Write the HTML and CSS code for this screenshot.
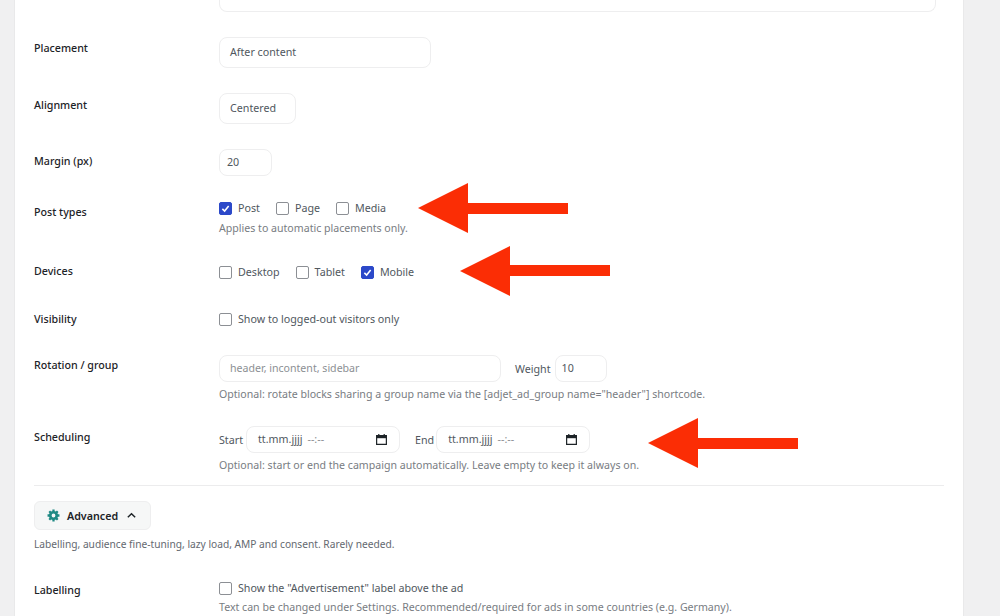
FILE: index.html
```html
<!DOCTYPE html>
<html lang="en">
<head>
<meta charset="utf-8">
<title>Ad settings</title>
<link rel="stylesheet" href="styles.css">
</head>
<body>
<main class="panel">
  <div class="cut-field"></div>

  <div class="row row-placement">
    <div class="label">Placement</div>
    <div class="control"><div class="box box-placement">After content</div></div>
  </div>
  <div class="row row-alignment">
    <div class="label label-five">Alignment</div>
    <div class="control"><div class="box box-alignment">Centered</div></div>
  </div>
  <div class="row row-margin">
    <div class="label label-five">Margin (px)</div>
    <div class="control"><div class="box box-margin">20</div></div>
  </div>

  <div class="row row-types">
    <div class="label label-check">Post types</div>
    <div class="control">
      <div class="checks">
        <label class="check"><span class="cb on"><svg viewBox="0 0 14 14"><path d="M3 7.4 5.9 10.2 11 3.8"/></svg></span>Post</label>
        <label class="check"><span class="cb"></span>Page</label>
        <label class="check"><span class="cb"></span>Media</label>
      </div>
      <p class="help help-tight">Applies to automatic placements only.</p>
    </div>
  </div>

  <div class="row row-devices">
    <div class="label label-devices">Devices</div>
    <div class="control">
      <div class="checks">
        <label class="check"><span class="cb"></span>Desktop</label>
        <label class="check"><span class="cb"></span>Tablet</label>
        <label class="check"><span class="cb on"><svg viewBox="0 0 14 14"><path d="M3 7.4 5.9 10.2 11 3.8"/></svg></span>Mobile</label>
      </div>
    </div>
  </div>

  <div class="row row-visibility">
    <div class="label label-vis">Visibility</div>
    <div class="control">
      <label class="check"><span class="cb"></span>Show to logged-out visitors only</label>
    </div>
  </div>

  <div class="row row-rotation">
    <div class="label label-rot">Rotation / group</div>
    <div class="control">
      <div class="inline">
        <div class="box box-group">header, incontent, sidebar</div>
        <span class="inline-label">Weight</span>
        <div class="box box-weight">10</div>
      </div>
      <p class="help help-tight">Optional: rotate blocks sharing a group name via the [adjet_ad_group name="header"] shortcode.</p>
    </div>
  </div>

  <div class="row row-schedule">
    <div class="label label-sched">Scheduling</div>
    <div class="control">
      <div class="inline">
        <span class="date-label">Start</span>
        <div class="box box-date"><span>tt.mm.jjjj</span><span class="time">--:--</span><svg class="cal" viewBox="0 0 12 12"><path d="M1.5 2.5h9v8h-9z"/><path class="cal-top" d="M1.5 2.2h9v2.6h-9z"/><path class="cal-pin" d="M3.5 1v1.5M8.5 1v1.5"/></svg></div>
        <span class="date-label date-end">End</span>
        <div class="box box-date"><span>tt.mm.jjjj</span><span class="time">--:--</span><svg class="cal" viewBox="0 0 12 12"><path d="M1.5 2.5h9v8h-9z"/><path class="cal-top" d="M1.5 2.2h9v2.6h-9z"/><path class="cal-pin" d="M3.5 1v1.5M8.5 1v1.5"/></svg></div>
      </div>
      <p class="help help-tight">Optional: start or end the campaign automatically. Leave empty to keep it always on.</p>
    </div>
  </div>

  <hr class="divider">

  <button class="advanced" type="button">
    <svg class="gear" viewBox="0 0 24 24"><path class="teeth" d="M12 1v5M12 18v5M1 12h5M18 12h5M4.2 4.2 8 8M16 16l3.8 3.8M4.2 19.8 8 16M16 8l3.8-3.8"/><circle cx="12" cy="12" r="6"/></svg>
    <span>Advanced</span>
    <svg class="chev" viewBox="0 0 12 12"><path d="M2 8 6 4l4 4"/></svg>
  </button>
  <p class="help help-adv">Labelling, audience fine-tuning, lazy load, AMP and consent. Rarely needed.</p>

  <div class="row row-labelling">
    <div class="label label-lab">Labelling</div>
    <div class="control">
      <label class="check"><span class="cb"></span>Show the "Advertisement" label above the ad</label>
      <p class="help help-lab">Text can be changed under Settings. Recommended/required for ads in some countries (e.g. Germany).</p>
    </div>
  </div>
</main>

<svg class="arrows" viewBox="0 0 1000 616" aria-hidden="true">
  <path d="M418 208 468 183V203H568V214H468V233Z"/>
  <path d="M460 271 510 246V265H610V276H510V296Z"/>
  <path d="M648 443 698 418V438H798V449H698V468Z"/>
</svg>
</body>
</html>
```
FILE: styles.css
```css
* { box-sizing: border-box; }
html, body { margin: 0; height: 616px; overflow: hidden; }
body {
  background: #f0f0f1;
  font-family: "Noto Sans", "Open Sans", sans-serif;
  font-size: 10.7px;
  color: #3c434a;
  position: relative;
}
.panel {
  width: 950px;
  height: 616px;
  margin-left: 14px;
  padding: 0 19px;
  background: #fff;
  border-left: 1px solid #e9e9ea;
  border-right: 1px solid #e9e9ea;
  overflow: hidden;
}
.cut-field {
  width: 717px;
  height: 12px;
  margin-left: 185px;
  border: 1px solid #eeeeef;
  border-top: 0;
  border-radius: 0 0 8px 8px;
}
.row { display: grid; grid-template-columns: 185px 1fr; }
.row-placement { margin-top: 25px; }
.row-alignment { margin-top: 25px; }
.row-margin { margin-top: 25px; }
.row-types { margin-top: 25px; }
.row-devices { margin-top: 29px; }
.row-visibility { margin-top: 32px; }
.row-rotation { margin-top: 28px; }
.row-schedule { margin-top: 24px; }

.label {
  font-weight: 500;
  color: #1d2327;
  line-height: 15px;
  padding-top: 4px;
}
.label-five { padding-top: 5px; }
.label-check { padding-top: 4px; }
.label-devices { padding-top: 0; margin-top: -1px; }
.label-vis { padding-top: 0; }
.label-rot { padding-top: 3px; }
.label-sched { padding-top: 4px; }
.label-lab { padding-top: 2px; }

.box {
  display: flex;
  align-items: center;
  height: 31px;
  border: 1px solid #eeeeef;
  border-radius: 8px;
  background: #fff;
  padding: 0 10px;
  color: #50575e;
  line-height: 15px;
}
.box-placement { width: 212px; }
.box-alignment { width: 77px; }
.box-margin { width: 53px; height: 27px; padding: 0 7px; }
.box-group { width: 282px; height: 27px; color: #8c8f94; font-size: 10.6px; }
.box-weight { width: 52px; height: 27px; padding: 0 6px; }
.box-date { width: 154px; height: 27px; padding: 0 11px; }
.box-date + .date-end { margin-left: 15px; }
.time { margin-left: 5px; color: #8c8f94; }
.cal { width: 13px; height: 13px; margin-left: auto; }
.cal path { fill: none; stroke: #1d2327; stroke-width: 1.1; }
.cal .cal-top { fill: #1d2327; stroke: none; }

.checks { display: flex; gap: 16px; }
.check { display: flex; align-items: center; line-height: 15px; color: #50575e; }
.cb {
  width: 13px;
  height: 13px;
  margin-right: 6px;
  border: 1px solid #8c8f94;
  border-radius: 2px;
  background: #fff;
  flex: none;
}
.cb.on { background: #2c49c9; border-color: #2c49c9; }
.cb svg { display: block; width: 11px; height: 11px; }
.cb svg path { fill: none; stroke: #fff; stroke-width: 2; }

.inline { display: flex; align-items: center; }
.inline-label { margin: 0 4px 0 14px; color: #50575e; }
.date-label { margin-right: 3px; color: #50575e; }
.date-end { margin-right: 2px; }

.help {
  margin: 6px 0 0;
  font-size: 10.6px;
  line-height: 15px;
  color: #787c82;
}
.help-tight { margin-top: 5px; }
.help-lab { margin-top: 4px; }
.divider {
  margin: 12px 0 0;
  height: 1px;
  border: 0;
  background: #ececed;
}
.advanced {
  display: flex;
  align-items: center;
  width: 117px;
  height: 29px;
  margin-top: 15px;
  padding: 0 12px;
  font: 600 10.7px "Noto Sans", sans-serif;
  color: #1d2327;
  background: #f6f7f7;
  border: 1px solid #eeeeef;
  border-radius: 6px;
}
.gear { width: 13px; height: 13px; margin-right: 7px; flex: none; }
.gear .teeth { fill: none; stroke: #1f8a84; stroke-width: 4.2; }
.gear circle { fill: #f6f7f7; stroke: #1f8a84; stroke-width: 5; }
.chev { width: 11px; height: 11px; margin-left: 8px; flex: none; }
.chev path { fill: none; stroke: #1d2327; stroke-width: 1.6; }
.help-adv { margin-top: 7px; font-size: 10.2px; color: #646970; }
.row-labelling { margin-top: 29px; }

.arrows { position: absolute; left: 0; top: 0; width: 1000px; height: 616px; }
.arrows path { fill: #fb2d05; }
```
